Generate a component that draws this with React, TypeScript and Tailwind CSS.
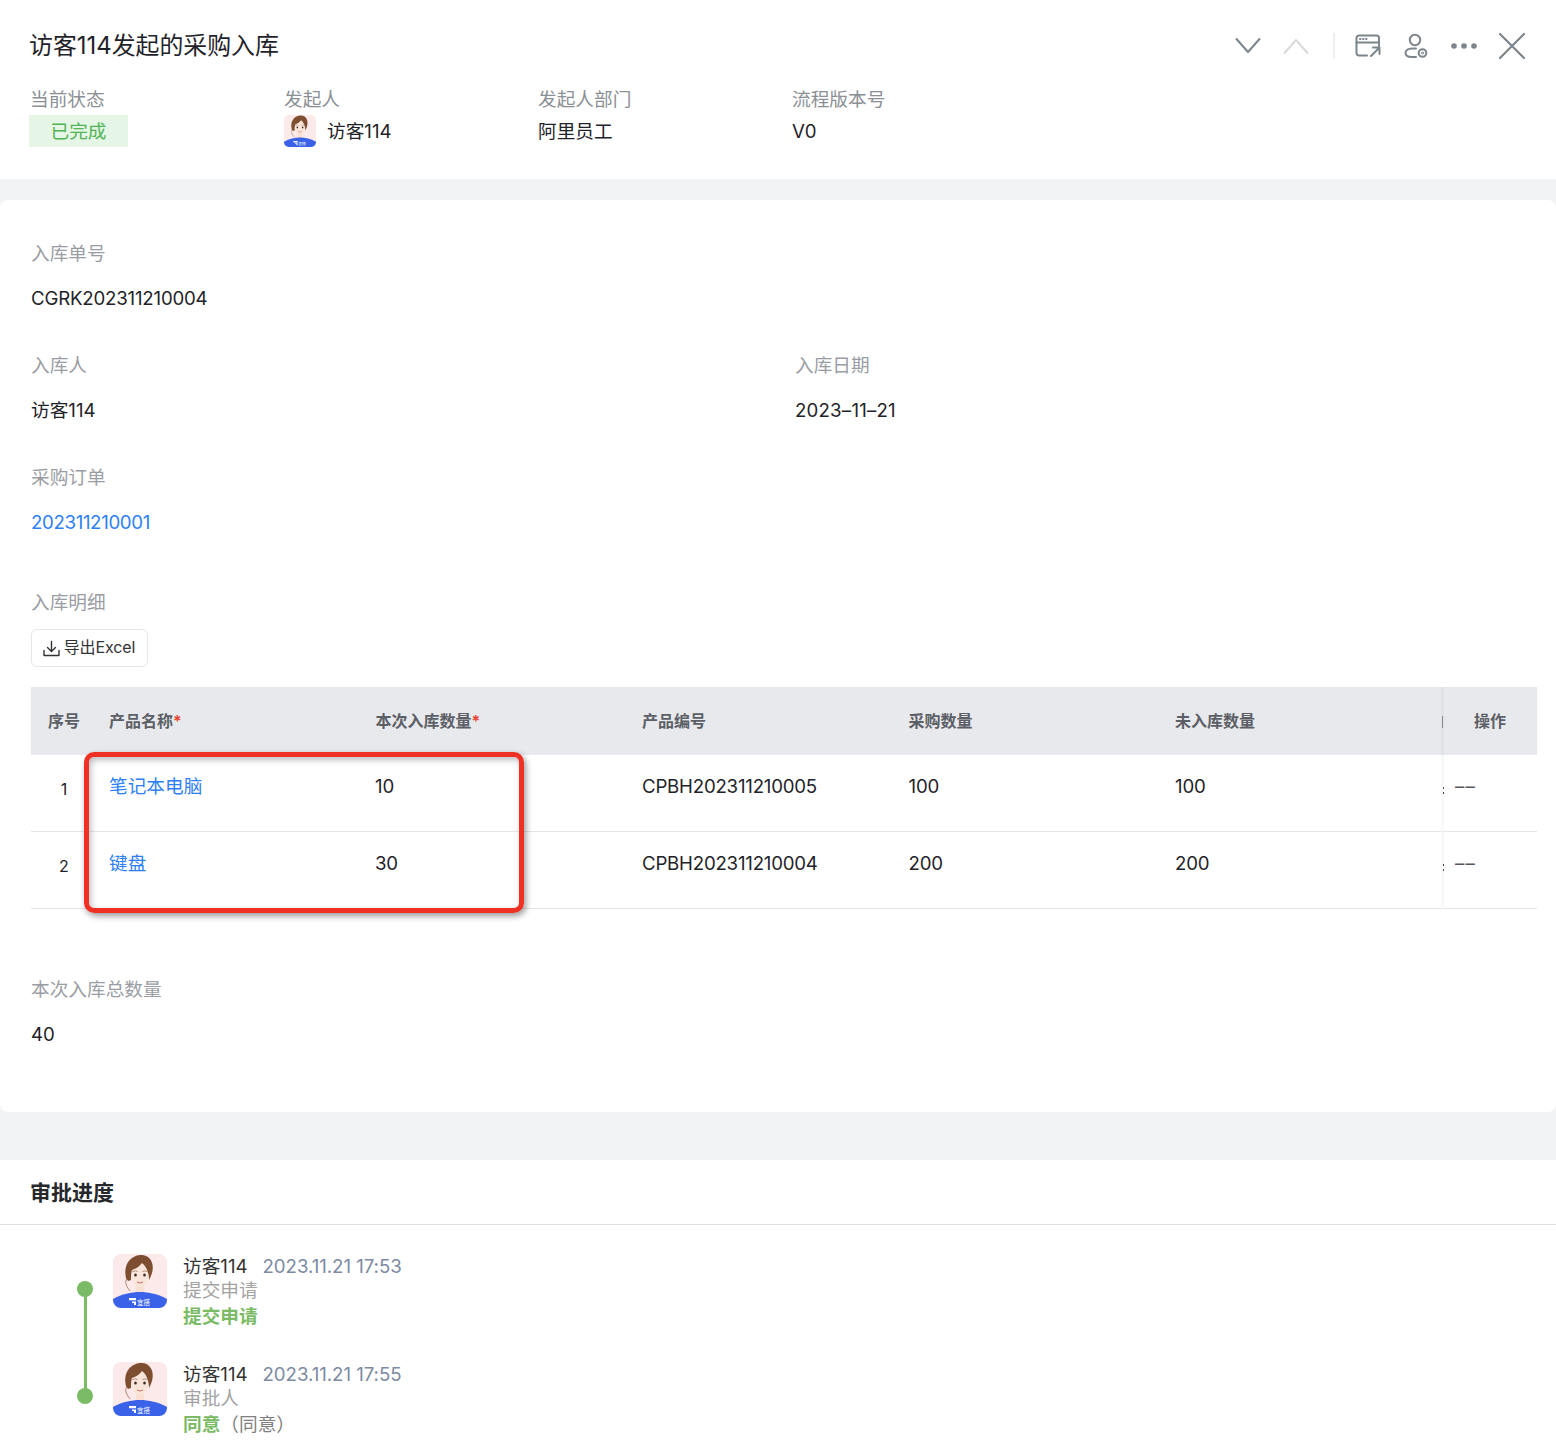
const FONT = 'font-["Inter","Noto_Sans_CJK_SC",sans-serif]';

const columns = 'grid grid-cols-[78px_266.5px_266.5px_266.5px_266.5px_268px_94px]';

const rows = [
  { no: 1, name: '笔记本电脑', qty: '10', code: 'CPBH202311210005', bought: '100', left: '100' },
  { no: 2, name: '键盘', qty: '30', code: 'CPBH202311210004', bought: '200', left: '200' },
];

function Avatar({ size }: { size: number }) {
  return (
    <svg width={size} height={size} viewBox="0 0 54 54" className="shrink-0">
      <defs>
        <clipPath id="avatar-clip">
          <rect width="54" height="54" rx="8" />
        </clipPath>
      </defs>
      <g clipPath="url(#avatar-clip)">
        <rect width="54" height="54" fill="#fce9ea" />
        <path d="M10 48 C16 40 22 38 27 38 C34 38 42 40 46 48 Z" fill="#efeceb" />
        <path d="M23 28 h8 v9 l-4 4 l-4 -4 Z" fill="#f8dfd2" />
        <ellipse cx="27" cy="21" rx="8.500" ry="12" fill="#fae5da" />
        <path d="M13 24 C10 11 17 2 27 1 C36 0 42 8 39 19 C38 22 37 24 36 26 C36 18 33 12 29 9 C26 13 22 15 19 16 C18 19 18 22 18 26 L15 27 Z" fill="#7d4f30" />
        <path d="M14 24 C11 29 14 33 17 37" fill="none" stroke="#8a5a3a" strokeWidth="0.700" />
        <ellipse cx="22.500" cy="21" rx="1.300" ry="1.500" fill="#3a2a22" />
        <ellipse cx="31.500" cy="21" rx="1.300" ry="1.500" fill="#3a2a22" />
        <path d="M19.500 17.500 q3 -1.300 5 0 M29.500 17.500 q2 -1.300 5 0" fill="none" stroke="#7a5238" strokeWidth="0.600" />
        <path d="M24 28 q3 2 6 0" fill="none" stroke="#c9605a" strokeWidth="0.900" />
        <path d="M0 45 C9 40 18 38 27 38 C36 38 45 40 54 45 V54 H0 Z" fill="#3a62e8" />
        <path d="M16 44 h7 v2.200 h-7 Z M19 47.500 h4 v3.500 h-2 v-2 h-2 Z" fill="#ffffff" />
        <text x="24" y="50.500" fontSize="6.500" fill="#ffffff" fontFamily="Noto Sans CJK SC, sans-serif">宜搭</text>
      </g>
    </svg>
  );
}

function IconSlot({ children }: { children: React.ReactNode }) {
  return <div className="w-12 h-8 flex items-center justify-center">{children}</div>;
}

function HeaderIcons() {
  return (
    <div className="flex items-center mt-[2px]">
      <IconSlot>
        <svg width="26" height="18" viewBox="0 0 26 18" fill="none" stroke="#7d858c" strokeWidth="2" strokeLinecap="round" strokeLinejoin="round">
          <path d="M1.5 2 L13 15 L24.500 2" />
        </svg>
      </IconSlot>
      <IconSlot>
        <svg width="26" height="18" viewBox="0 0 26 18" fill="none" stroke="#d8dadc" strokeWidth="2" strokeLinecap="round" strokeLinejoin="round">
          <path d="M1.5 16 L13 3 L24.500 16" />
        </svg>
      </IconSlot>
      <div className="w-6 flex justify-end pr-[9px]">
        <div className="w-0.5 h-[26px] bg-[#eeeff0]" />
      </div>
      <IconSlot>
        <svg width="26" height="24" viewBox="0 0 26 24" fill="none" stroke="#7d858c" strokeWidth="2" strokeLinecap="round" strokeLinejoin="round">
          <path d="M24 12 V4 a2.500 2.500 0 0 0 -2.500 -2.500 H4 A2.500 2.500 0 0 0 1.500 4 V19 a2.500 2.500 0 0 0 2.500 2.500 H12" />
          <path d="M1.500 8.500 H24" />
          <path d="M16 22 L24 14 M18 13.500 H24.500 V20" />
          <path d="M5 5 h.5 M8 5 h.5 M11 5 h.5" />
        </svg>
      </IconSlot>
      <IconSlot>
        <svg width="24" height="26" viewBox="0 0 24 26" fill="none" stroke="#7d858c" strokeWidth="2" strokeLinecap="round" strokeLinejoin="round">
          <circle cx="11" cy="7" r="5.200" />
          <path d="M12 15.500 H8 C4 15.500 1.500 17.500 1.500 20 C1.500 22.500 4 24 8 24 H12" />
          <circle cx="18.500" cy="20" r="3.800" />
          <circle cx="18.500" cy="20" r="1" strokeWidth="1" />
        </svg>
      </IconSlot>
      <IconSlot>
        <svg width="28" height="8" viewBox="0 0 28 8" fill="#7d858c">
          <circle cx="4" cy="4" r="2.800" />
          <circle cx="14" cy="4" r="2.800" />
          <circle cx="24" cy="4" r="2.800" />
        </svg>
      </IconSlot>
      <IconSlot>
        <svg width="28" height="28" viewBox="0 0 28 28" fill="none" stroke="#7d858c" strokeWidth="2.200" strokeLinecap="round">
          <path d="M2 2 L26 26 M26 2 L2 26" />
        </svg>
      </IconSlot>
    </div>
  );
}

function Meta({ label, children }: { label: string; children: React.ReactNode }) {
  return (
    <div className="w-[254px]">
      <div className="h-[26px] leading-[28px] text-[18.67px] text-[#8b8f96]">{label}</div>
      <div className="mt-[3px] h-8 flex items-center text-[18.67px] leading-[34px] text-[#1f2329]">{children}</div>
    </div>
  );
}

function Field({ label, children, className }: { label: string; children: React.ReactNode; className?: string }) {
  return (
    <div className={className}>
      <div className="h-[26px] leading-[28px] text-[18.67px] text-[#9a9da3]">{label}</div>
      <div className="mt-[19px] h-[26px] leading-[28px] text-[18.67px] text-[#1f2329]">{children}</div>
    </div>
  );
}

function DetailTable() {
  return (
    <div className="relative mt-5 mr-[19px]">
      <div className={`${columns} h-[68px] items-center bg-[#e8e9ed] text-base font-semibold text-[#5c5f66]`}>
        <div className="text-center pr-[12px]">序号</div>
        <div>产品名称<span className="text-[#e8402e]">*</span></div>
        <div>本次入库数量<span className="text-[#e8402e]">*</span></div>
        <div>产品编号</div>
        <div>采购数量</div>
        <div>未入库数量</div>
        <div className="pl-[31px]">操作</div>
      </div>
      {rows.map(row => (
        <div key={row.no} className={`${columns} h-[77px] border-b border-[#e4e5e7] text-[18.67px] text-[#1f2329]`}>
          <div className="pt-[21px] pr-[12px] text-center text-base leading-[26px]">{row.no}</div>
          <div className="pt-[18.5px] leading-[26px] text-[#2e7ff6]">{row.name}</div>
          <div className="pt-[18.5px] leading-[26px] tracking-[-0.2px] -ml-[0.5px]">{row.qty}</div>
          <div className="pt-[18.5px] leading-[26px] tracking-[-0.22px]">{row.code}</div>
          <div className="pt-[18.5px] leading-[26px] tracking-[-0.2px]">{row.bought}</div>
          <div className="pt-[18.5px] leading-[26px] tracking-[-0.2px]">{row.left}</div>
          <div className="pl-3 pt-[19px] leading-[26px] tracking-[1.2px] text-[#55585e]">––</div>
        </div>
      ))}
      {/* edge of the fixed column: soft shadow and the clipped glyphs showing behind it */}
      <div className="absolute top-0 h-[68px] left-[1410px] w-[3px] bg-[#e1e2e6]" />
      <div className="absolute top-[68px] h-[154px] left-[1410px] w-[3px] bg-[#f4f5f6]/60" />
      <div className="absolute top-[29px] left-[1411px] w-[1px] h-[12px] bg-[#8a8c92]" />
      <div className="absolute top-[100px] left-[1412px] w-[1px] h-[2px] bg-[#44464a]" />
      <div className="absolute top-[105px] left-[1412px] w-[1px] h-[2px] bg-[#44464a]" />
      <div className="absolute top-[177px] left-[1412px] w-[1px] h-[2px] bg-[#44464a]" />
      <div className="absolute top-[182px] left-[1412px] w-[1px] h-[2px] bg-[#44464a]" />
      <div className="absolute left-[53px] top-[65px] w-[440px] h-[161px] rounded-[10px] border-[5px] border-[#ee3124] shadow-[2px_3px_6px_rgba(0,0,0,0.4),inset_2px_3px_6px_rgba(0,0,0,0.25)]" />
    </div>
  );
}

function Step({ time, role, result, note, dotClass, lineClass }: {
  time: string; role: string; result: string; note?: string; dotClass: string; lineClass: string;
}) {
  return (
    <div className="flex h-[108px]">
      <div className="relative w-[113px] shrink-0">
        <div className={`absolute left-[84px] w-[3px] bg-[#7bbb65] ${lineClass}`} />
        <div className={`absolute left-[77px] w-4 h-4 rounded-full bg-[#7bbb65] ${dotClass}`} />
      </div>
      <Avatar size={54} />
      <div className="ml-4 text-[18.67px] leading-[25px]">
        <div className="text-[#333]">访客114<span className="ml-[15px] text-[#7d8aa3] tracking-[-0.05px]">{time}</span></div>
        <div className="text-[#a3a3a3] -mt-[1px]">{role}</div>
        <div className="mt-[1px] font-semibold text-[#7bbb65]">
          {result}
          {note && <span className="font-normal text-[#808080]">{note}</span>}
        </div>
      </div>
    </div>
  );
}

export default function App() {
  return (
    <div className={`${FONT} w-[1556px] h-[1442px] overflow-hidden bg-[#f2f3f5]`}>
      <div className="h-[179px] bg-white pl-[30px] pr-5 pt-[29px]">
        <div className="flex items-center justify-between h-8">
          <h1 className="text-[23.9px] leading-8 mt-[2px] -ml-[1px] text-[#1f2329]">访客114发起的采购入库</h1>
          <HeaderIcons />
        </div>
        <div className="flex mt-[25px]">
          <Meta label="当前状态">
            <span className="-ml-[1px] w-[99px] h-8 pt-[2px] flex items-center justify-center bg-[#e5f5e6] text-[#4fb453]">已完成</span>
          </Meta>
          <Meta label="发起人">
            <Avatar size={32} />
            <span className="ml-[11px] pt-[2px]">访客114</span>
          </Meta>
          <Meta label="发起人部门"><span className="pt-[2px]">阿里员工</span></Meta>
          <Meta label="流程版本号"><span className="pt-[2px]">V0</span></Meta>
        </div>
      </div>

      <div className="mt-[21px] h-[912px] rounded-lg bg-white pl-[31px] pt-10">
        <Field label="入库单号"><span className="tracking-[-0.2px]">CGRK202311210004</span></Field>
        <div className="flex mt-[41px]">
          <Field label="入库人" className="w-[764px]">访客114</Field>
          <Field label="入库日期"><span className="tracking-[0.2px]">2023–11–21</span></Field>
        </div>
        <Field label="采购订单" className="mt-[41px]">
          <span className="text-[#2e7ff6] tracking-[-0.35px]">202311210001</span>
        </Field>
        <div className="mt-[54px] h-[26px] leading-[28px] text-[18.67px] text-[#9a9da3]">入库明细</div>
        <button className="mt-[14px] h-[38px] w-[117px] flex items-center justify-center gap-1 pb-[2px] pr-[1px] rounded-md border border-[#e4e6e9] text-base text-[#333] tracking-[-0.1px]">
          <svg width="17" height="17" viewBox="0 0 17 17" fill="none" stroke="#333" strokeWidth="1.400" strokeLinecap="round" strokeLinejoin="round" className="mt-[2px]">
            <path d="M8.500 1.500 V11 M4.500 7.500 L8.500 11.500 L12.500 7.500 M1 10.500 V15.500 H16 V10.500" />
          </svg>
          导出Excel
        </button>
        <DetailTable />
        <Field label="本次入库总数量" className="mt-[67px]">40</Field>
      </div>

      <div className="mt-12 h-[282px] bg-white">
        <div className="h-[65px] border-b border-[#dfe0e2] pl-[30px] pt-[19px] text-[21px] leading-7 font-semibold text-[#26282c]">审批进度</div>
        <div className="pt-[29px]">
          <Step time="2023.11.21 17:53" role="提交申请" result="提交申请" dotClass="top-[27px]" lineClass="top-[35px] bottom-0" />
          <Step time="2023.11.21 17:55" role="审批人" result="同意" note="（同意）" dotClass="top-[26px]" lineClass="top-0 h-[34px]" />
        </div>
      </div>
    </div>
  );
}
